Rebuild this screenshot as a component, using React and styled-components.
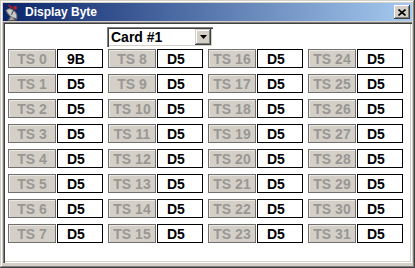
import React from 'react';
import styled, { createGlobalStyle } from 'styled-components';

const Global = createGlobalStyle`
    html, body {
        margin: 0;
        padding: 0;
        background: #d4d0c8;
    }
`;

const Window = styled.div`
    box-sizing: border-box;
    width: 415px;
    height: 268px;
    padding: 3px 3px 5px 3px;
    display: flex;
    flex-direction: column;
    background: #d4d0c8;
    box-shadow:
        inset -1px -1px #404040,
        inset 1px 1px #d4d0c8,
        inset -2px -2px #808080,
        inset 2px 2px #ffffff;
`;

const TitleBar = styled.div`
    height: 18px;
    display: flex;
    align-items: center;
    padding: 0 2px 0 1px;
    background: linear-gradient(90deg, #0a246a 0%, #a6caf0 100%);
    font-family: "Liberation Sans", Arial, sans-serif;
    font-weight: bold;
    font-size: 12px;
    color: #fff;
`;

const Title = styled.span`
    margin-left: 4px;
    flex: 1;
`;

const CloseButton = styled.div`
    box-sizing: border-box;
    width: 16px;
    height: 14px;
    background: #d4d0c8;
    display: flex;
    align-items: center;
    justify-content: center;
    box-shadow:
        inset -1px -1px #404040,
        inset 1px 1px #ffffff,
        inset -2px -2px #808080;
`;

const Client = styled.div`
    flex: 1;
    margin-top: 1px;
    background: #fff;
    padding: 5px 3px 0 5px;
    box-shadow:
        inset 1px 1px #808080,
        inset 2px 2px #404040,
        inset -1px -1px #ffffff,
        inset -2px -2px #d4d0c8;
`;

const Header = styled.div`
    display: grid;
    grid-template-columns: repeat(4, 95px);
    column-gap: 5px;
    margin-bottom: 2px;
`;

const Combo = styled.div`
    grid-column: 2;
    margin-left: -1px;
    box-sizing: border-box;
    width: 106px;
    height: 20px;
    padding: 2px;
    display: flex;
    align-items: center;
    background: #fff;
    box-shadow:
        inset 1px 1px #808080,
        inset 2px 2px #404040,
        inset -1px -1px #ffffff,
        inset -2px -2px #d4d0c8;
    font-family: "Liberation Sans", Arial, sans-serif;
    font-weight: bold;
    font-size: 14px;
    color: #000;
`;

const ComboText = styled.span`
    flex: 1;
    padding-left: 2px;
`;

const DropButton = styled.div`
    box-sizing: border-box;
    width: 16px;
    height: 16px;
    background: #d4d0c8;
    display: flex;
    align-items: center;
    justify-content: center;
    box-shadow:
        inset -1px -1px #404040,
        inset 1px 1px #d4d0c8,
        inset -2px -2px #808080,
        inset 2px 2px #ffffff;
`;

const Grid = styled.div`
    display: grid;
    grid-template-columns: repeat(4, 95px);
    grid-template-rows: repeat(8, 19px);
    grid-auto-flow: column;
    column-gap: 5px;
    row-gap: 6px;
`;

const Pair = styled.div`
    display: flex;
    gap: 1px;
`;

const SlotButton = styled.div`
    box-sizing: border-box;
    width: 48px;
    height: 19px;
    border: 1px solid #6f6f6f;
    background: #d4d0c8;
    box-shadow: inset 1px 1px #ece9e4;
    display: flex;
    align-items: center;
    justify-content: center;
    font-family: "Liberation Sans", Arial, sans-serif;
    font-weight: bold;
    font-size: 14px;
    color: #999794;
`;

const Value = styled.div`
    box-sizing: border-box;
    width: 46px;
    height: 19px;
    border: 1px solid #000;
    background: #fff;
    display: flex;
    align-items: center;
    padding-left: 9px;
    font-family: "Liberation Sans", Arial, sans-serif;
    font-weight: bold;
    font-size: 14px;
    color: #000;
`;

const DishIcon = () => (
    <svg width="17" height="17" viewBox="0 0 16 16">
        <path d="M2 6 Q5 13 12 14 Q13 9 9 6 Q5 3 2 6 Z" fill="#c8c8c8" stroke="#707070" strokeWidth="1" />
        <path d="M6 12 L4 15.5 L11 15.5 L9 13" fill="#a0a0a0" stroke="#505050" strokeWidth="1" />
        <path d="M7 10 L10 4" stroke="#404040" strokeWidth="1" />
        <rect x="9" y="2" width="3" height="3" fill="#c02020" />
        <path d="M4 1 L8 4" stroke="#c02020" strokeWidth="1.2" />
    </svg>
);

const values = Array.from({ length: 32 }, (_, i) => (i === 0 ? '9B' : 'D5'));

export default function App() {
    return (
        <>
            <Global />
            <Window>
                <TitleBar>
                    <DishIcon />
                    <Title>Display Byte</Title>
                    <CloseButton>
                        <svg width="8" height="7" viewBox="0 0 8 7">
                            <path d="M0.5 0.5 L7.5 6.5 M7.5 0.5 L0.5 6.5" stroke="#000" strokeWidth="1.6" />
                        </svg>
                    </CloseButton>
                </TitleBar>
                <Client>
                    <Header>
                        <Combo>
                            <ComboText>Card #1</ComboText>
                            <DropButton>
                                <svg width="7" height="4" viewBox="0 0 7 4">
                                    <path d="M0 0 L7 0 L3.5 4 Z" fill="#000" />
                                </svg>
                            </DropButton>
                        </Combo>
                    </Header>
                    <Grid>
                        {values.map((v, i) => (
                            <Pair key={i}>
                                <SlotButton>TS {i}</SlotButton>
                                <Value>{v}</Value>
                            </Pair>
                        ))}
                    </Grid>
                </Client>
            </Window>
        </>
    );
}
